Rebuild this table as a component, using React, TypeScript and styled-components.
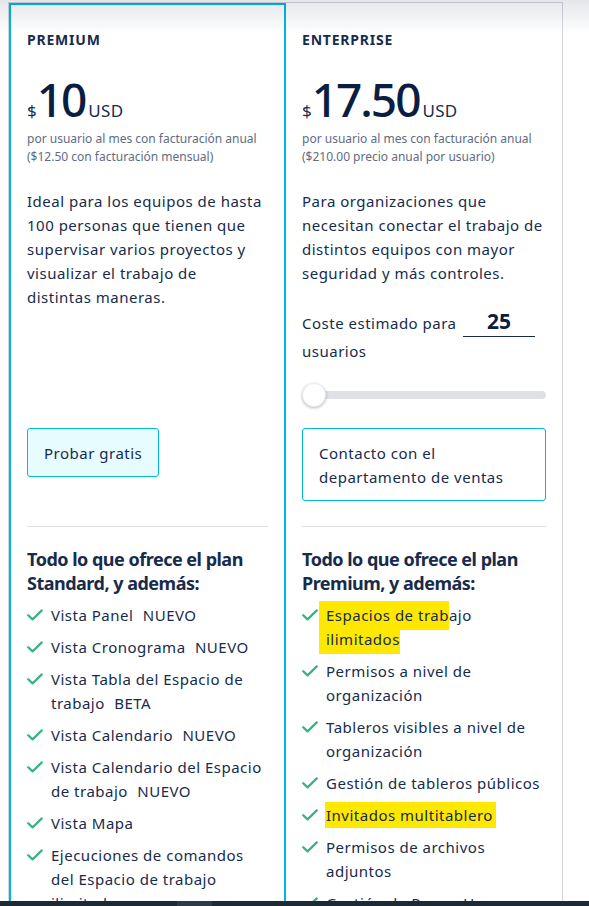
import React from "react";
import styled, { createGlobalStyle } from "styled-components";

const GlobalStyle = createGlobalStyle`
  html, body { margin: 0; padding: 0; background: #ffffff; }
  body {
    font-family: "Noto Sans", "Liberation Sans", sans-serif;
    color: #172b4d;
    overflow: hidden;
  }
  * { box-sizing: border-box; }
`;

const Page = styled.div`
  position: relative;
  height: 906px;
  padding: 2px 0 0 8px;
  overflow: hidden;
`;

const TopShade = styled.div`
  position: absolute;
  left: 0;
  right: 0;
  top: 0;
  height: 34px;
  pointer-events: none;
  background: linear-gradient(rgba(9, 30, 66, 0.11), rgba(9, 30, 66, 0));
`;

const BottomBar = styled.div`
  position: absolute;
  left: 0;
  right: 0;
  bottom: 0;
  height: 5px;
  background: #1b2a35;
  display: flex;
`;

const BarThumb = styled.div`
  margin-left: 177px;
  width: 35px;
  background: #2d3a45;
`;

const Frame = styled.div`
  width: 555px;
  min-height: 910px;
  border: 1px solid #d3d6dd;
  border-bottom: none;
  display: grid;
  grid-template-columns: 277px 276px;
`;

const Card = styled.section<{ $featured?: boolean }>`
  display: flex;
  flex-direction: column;
  padding: ${(p) => (p.$featured ? "25px 16px 0" : "27px 16px 0")};
  border: ${(p) => (p.$featured ? "2px solid #00b8d9" : "none")};
  border-bottom: none;
`;

const Top = styled.div`
  height: 398px;
  display: flex;
  flex-direction: column;
`;

const PlanName = styled.h2`
  margin: 0;
  font-size: 14px;
  line-height: 20px;
  font-weight: 700;
  letter-spacing: 0.8px;
  text-transform: uppercase;
`;

const PriceRow = styled.div`
  margin-top: 26px;
  display: flex;
  align-items: baseline;
  height: 46px;
`;

const Currency = styled.span`
  font-size: 17px;
  line-height: 46px;
  margin-right: 0;
`;

const Amount = styled.span`
  font-size: 46px;
  line-height: 46px;
  font-weight: 500;
  letter-spacing: -2px;
  color: #091e42;
`;

const Unit = styled.span`
  font-size: 17px;
  line-height: 46px;
  margin-left: 3px;
  letter-spacing: 0.3px;
`;

const Billing = styled.p`
  margin: 8px 0 0;
  font-size: 12px;
  line-height: 18px;
  color: #5e6c84;
`;

const Description = styled.p`
  margin: 23px 0 0;
  font-size: 15px;
  line-height: 24px;
  letter-spacing: 0.5px;
`;

const Estimator = styled.p`
  margin: 24px 0 0;
  font-size: 15px;
  line-height: 28px;
  letter-spacing: 0.5px;
`;

const UsersInput = styled.span`
  display: inline-block;
  vertical-align: top;
  width: 72px;
  height: 28px;
  margin-left: 2px;
  border-bottom: 1px solid #172b4d;
  text-align: center;
  font-size: 21px;
  line-height: 24px;
  font-weight: 700;
  letter-spacing: 0;
  color: #091e42;
`;

const Slider = styled.div`
  position: relative;
  margin-top: 18px;
  height: 24px;
  display: flex;
  align-items: center;
`;

const Track = styled.div`
  flex: 1;
  height: 8px;
  border-radius: 4px;
  background: #dfe1e6;
`;

const Thumb = styled.div`
  position: absolute;
  left: 0;
  top: 0;
  width: 24px;
  height: 24px;
  border-radius: 50%;
  background: #ffffff;
  border: 1px solid #ebecf0;
  box-shadow: 0 1px 3px rgba(9, 30, 66, 0.3);
`;

const ActionArea = styled.div`
  height: 98px;
  display: flex;
  flex-direction: column;
  align-items: flex-start;
`;

const CtaButton = styled.button<{ $featured?: boolean; $wide?: boolean }>`
  align-self: ${(p) => (p.$wide ? "stretch" : "flex-start")};
  text-align: left;
  padding: 11.5px 16px;
  border: 1px solid #00b8d9;
  border-radius: 3px;
  background: ${(p) => (p.$featured ? "#e6fcff" : "#ffffff")};
  font-family: inherit;
  font-size: 15px;
  line-height: 24px;
  letter-spacing: 0.5px;
  color: #172b4d;
`;

const Divider = styled.hr`
  margin: 0;
  border: none;
  height: 1px;
  background: #dfe1e6;
`;

const FeaturesTitle = styled.h3`
  margin: 20px 0 0;
  font-size: 18px;
  line-height: 24px;
  font-weight: 700;
  letter-spacing: -0.5px;
`;

const FeatureList = styled.ul`
  list-style: none;
  margin: 8px 0 0;
  padding: 0;
  display: flex;
  flex-direction: column;
  gap: 8px;
`;

const FeatureItem = styled.li`
  display: flex;
  gap: 8px;
  font-size: 15px;
  line-height: 24px;
  letter-spacing: 0.5px;
`;

const CheckBox = styled.span`
  flex: none;
  width: 16px;
  height: 24px;
  display: flex;
  align-items: center;
`;

const Tag = styled.span`
  display: inline-block;
  margin-left: 5px;
`;

const Mark = styled.span<{ $blob?: boolean }>`
  background: #ffe800;
  padding: ${(p) => (p.$blob ? "4px 0 5px 7px" : "3px 3px 3px 1px")};
  margin: ${(p) => (p.$blob ? "0 0 0 -7px" : "0 -3px 0 -1px")};
  -webkit-box-decoration-break: clone;
  box-decoration-break: clone;
`;

const Check = () => (
  <CheckBox>
    <svg width="16" height="12" viewBox="0 0 16 12" fill="none">
      <path
        d="M1.2 6.2 L5.6 10.4 L14.8 1.4"
        stroke="#36b37e"
        strokeWidth="2.2"
        strokeLinecap="round"
        strokeLinejoin="round"
      />
    </svg>
  </CheckBox>
);

const Feature = ({ children }: { children: React.ReactNode }) => (
  <FeatureItem>
    <Check />
    <span>{children}</span>
  </FeatureItem>
);

export default function App() {
  return (
    <Page>
      <GlobalStyle />
      <Frame>
        <Card $featured>
          <Top>
            <PlanName>Premium</PlanName>
            <PriceRow>
              <Currency>$</Currency>
              <Amount>10</Amount>
              <Unit>USD</Unit>
            </PriceRow>
            <Billing>
              por usuario al mes con facturación anual
              <br />
              ($12.50 con facturación mensual)
            </Billing>
            <Description>
              Ideal para los equipos de hasta 100 personas que tienen que
              supervisar varios proyectos y visualizar el trabajo de{" "}
              {"distintas\u00A0maneras."}
            </Description>
          </Top>
          <ActionArea>
            <CtaButton $featured>Probar gratis</CtaButton>
          </ActionArea>
          <Divider />
          <FeaturesTitle>
            Todo lo que ofrece el plan Standard, y además:
          </FeaturesTitle>
          <FeatureList>
            <Feature>
              Vista Panel <Tag>NUEVO</Tag>
            </Feature>
            <Feature>
              Vista Cronograma <Tag>NUEVO</Tag>
            </Feature>
            <Feature>
              Vista Tabla del Espacio de trabajo <Tag>BETA</Tag>
            </Feature>
            <Feature>
              Vista Calendario <Tag>NUEVO</Tag>
            </Feature>
            <Feature>
              Vista Calendario del Espacio de trabajo <Tag>NUEVO</Tag>
            </Feature>
            <Feature>Vista Mapa</Feature>
            <Feature>
              Ejecuciones de comandos del Espacio de trabajo ilimitadas
            </Feature>
          </FeatureList>
        </Card>

        <Card>
          <Top>
            <PlanName>Enterprise</PlanName>
            <PriceRow>
              <Currency>$</Currency>
              <Amount>17.50</Amount>
              <Unit>USD</Unit>
            </PriceRow>
            <Billing>
              por usuario al mes con facturación anual
              <br />
              ($210.00 precio anual por usuario)
            </Billing>
            <Description>
              Para organizaciones que necesitan conectar el trabajo de
              distintos equipos con mayor seguridad y más controles.
            </Description>
            <Estimator>
              Coste estimado para <UsersInput>25</UsersInput> usuarios
            </Estimator>
            <Slider>
              <Track />
              <Thumb />
            </Slider>
          </Top>
          <ActionArea>
            <CtaButton $wide>Contacto con el departamento de ventas</CtaButton>
          </ActionArea>
          <Divider />
          <FeaturesTitle>
            Todo lo que ofrece el plan Premium, y además:
          </FeaturesTitle>
          <FeatureList>
            <Feature>
              <Mark $blob>Espacios de trab</Mark>ajo <Mark $blob>ilimitados</Mark>
            </Feature>
            <Feature>Permisos a nivel de organización</Feature>
            <Feature>Tableros visibles a nivel de organización</Feature>
            <Feature>Gestión de tableros públicos</Feature>
            <Feature>
              <Mark>Invitados multitablero</Mark>
            </Feature>
            <Feature>Permisos de archivos adjuntos</Feature>
            <Feature>Gestión de Power-Ups administrados</Feature>
          </FeatureList>
        </Card>
      </Frame>
      <TopShade />
      <BottomBar>
        <BarThumb />
      </BottomBar>
    </Page>
  );
}
